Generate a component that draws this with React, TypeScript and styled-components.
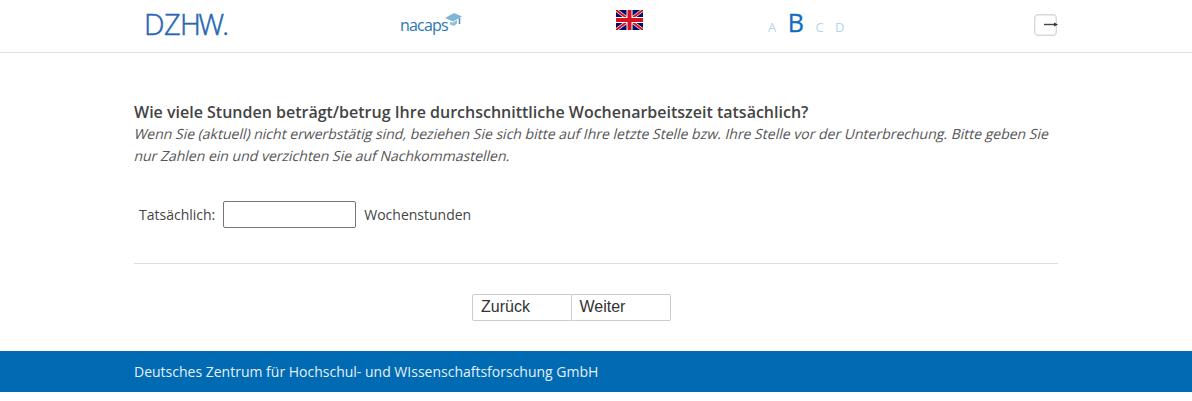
import React from 'react';
import styled, {createGlobalStyle} from "styled-components";

const GlobalStyle = createGlobalStyle`
  html, body {
    margin: 0;
    padding: 0;
    background: #fff;
    font-family: "Open Sans", "Liberation Sans", sans-serif;
    color: #444;
  }
`

const UkFlag = () => (
    <svg width="27" height="20" viewBox="0 0 27 20">
        <rect width="27" height="20" fill="#00106b"/>
        <path d="M0 0L27 20M27 0L0 20" stroke="#fff" strokeWidth="3.2"/>
        <path d="M0 0L27 20M27 0L0 20" stroke="#d8121f" strokeWidth="2"/>
        <path d="M13.5 0V20M0 10H27" stroke="#fff" strokeWidth="6"/>
        <path d="M13.5 0V20M0 10H27" stroke="#d8121f" strokeWidth="4"/>
    </svg>
);

const Cap = () => (
    <svg width="17" height="14" viewBox="0 0 17 14">
        <path d="M0 5L9 0L17 3.5L8 8.5Z" fill="#7fb4d6"/>
        <path d="M5 9V11.5L9 13L12 10.5V7L8 9.5Z" fill="#8fbfdd"/>
        <path d="M14.5 5V11" stroke="#4f94c2" strokeWidth="1.6"/>
    </svg>
);

const ExitIcon = () => (
    <svg width="24" height="24" viewBox="0 0 24 24">
        <rect x="0.7" y="0.7" width="21.6" height="20.6" rx="3.5" fill="#fff" stroke="#d9d9d9" strokeWidth="1.4"/>
        <path d="M10 10.5H21" stroke="#444" strokeWidth="1.4"/>
        <path d="M20 8.5L24 10.5L20 12.5Z" fill="#333"/>
    </svg>
);

export default function App() {
    return (
        <>
            <GlobalStyle/>
            <Header>
                <HeaderInner>
                    <DzhwLogo>DZH<W>W</W><Dot>.</Dot></DzhwLogo>
                    <NacapsLogo>nacaps<CapWrapper><Cap/></CapWrapper></NacapsLogo>
                    <FlagLink><UkFlag/></FlagLink>
                    <Versions>
                        <Version>A</Version>
                        <Version active>B</Version>
                        <Version>C</Version>
                        <Version>D</Version>
                    </Versions>
                    <ExitLink><ExitIcon/></ExitLink>
                </HeaderInner>
            </Header>
            <Main>
                <Question>Wie viele Stunden beträgt/betrug Ihre durchschnittliche Wochenarbeitszeit tatsächlich?</Question>
                <Instruction>
                    <InstructionLine>Wenn Sie (aktuell) nicht erwerbstätig sind, beziehen Sie sich bitte auf Ihre letzte Stelle bzw. Ihre Stelle vor der Unterbrechung. Bitte geben Sie</InstructionLine>
                    <InstructionLine>nur Zahlen ein und verzichten Sie auf Nachkommastellen.</InstructionLine>
                </Instruction>
                <AnswerRow>
                    <span>Tatsächlich:</span>
                    <Input type="text"/>
                    <span>Wochenstunden</span>
                </AnswerRow>
                <Divider/>
                <Pager>
                    <PagerButton>Zurück</PagerButton>
                    <PagerButton>Weiter</PagerButton>
                </Pager>
            </Main>
            <Footer>
                <FooterText>Deutsches Zentrum für Hochschul- und WIssenschaftsforschung GmbH</FooterText>
            </Footer>
        </>
    );
}

const Header = styled.header`
  height: 52px;
  border-bottom: 1px solid #e0e0e0;
`
const HeaderInner = styled.div`
  width: 924px;
  height: 100%;
  margin: 0 auto;
  display: grid;
  grid-template-columns: 266px 216px 152px 266px 24px;
`
const DzhwLogo = styled.div`
  padding: 6px 0 0 10px;
  font-family: "Open Sans", sans-serif;
  font-size: 29px;
  font-weight: 300;
  -webkit-text-stroke: 0.5px #2566b5;
  line-height: 36px;
  letter-spacing: -0.6px;
  color: #2566b5;
`
const W = styled.span`
  margin-left: -2px;
  letter-spacing: -1px;
`
const Dot = styled.span`
  font-size: 20px;
  font-weight: 400;
`
const NacapsLogo = styled.div`
  position: relative;
  padding-top: 13px;
  font-size: 16px;
  line-height: 24px;
  letter-spacing: -0.8px;
  color: #2a78b5;
`
const CapWrapper = styled.span`
  position: absolute;
  left: 45px;
  top: 13px;
  line-height: 0;
`
const FlagLink = styled.div`
  padding-top: 10px;
`
const Versions = styled.div`
  display: flex;
  align-items: baseline;
  gap: 11.5px;
  padding-top: 4px;
  height: 36px;
`
const Version = styled.span<{active?: boolean}>`
  font-size: ${p => p.active ? "25px" : "13px"};
  font-weight: ${p => p.active ? 500 : 400};
  -webkit-text-stroke: ${p => p.active ? "0.3px #0e6cbf" : "0"};
  line-height: 36px;
  color: ${p => p.active ? "#0e6cbf" : "#b5d5ee"};
`
const ExitLink = styled.div`
  padding-top: 14px;
`
const Main = styled.main`
  width: 924px;
  margin: 0 auto;
  padding-top: 48px;
  height: 250px;
`
const Question = styled.div`
  font-size: 16px;
  font-weight: 600;
  line-height: 22px;
  color: #444;
`
const Instruction = styled.div`
  font-size: 14px;
  line-height: 22px;
  color: #555;
`
// the original renders a slanted regular face, narrower italic cut doesn't fit
const InstructionLine = styled.div`
  white-space: nowrap;
  transform: skewX(-14deg);
  transform-origin: left 80%;
  margin-left: -1px;
`
const AnswerRow = styled.div`
  display: flex;
  align-items: center;
  gap: 8px;
  margin-top: 34px;
  padding-left: 5px;
  font-size: 14px;
`
const Input = styled.input`
  box-sizing: border-box;
  width: 133px;
  height: 27px;
  border: 1px solid #767676;
  border-radius: 2px;
  background: #fff;
`
const Divider = styled.hr`
  margin: 35px 0 0;
  border: 0;
  border-top: 1px solid #ddd;
`
const Pager = styled.div`
  display: flex;
  margin: 30px 0 0 338px;
  & > button + button {
    border-left: 0;
    border-radius: 0 2px 2px 0;
  }
  & > button:first-child {
    border-radius: 2px 0 0 2px;
  }
`
const PagerButton = styled.button`
  box-sizing: border-box;
  width: 99.5px;
  height: 27px;
  padding: 0 0 2px 8px;
  text-align: left;
  border: 1px solid #ccc;
  background: #fff;
  font-family: "Liberation Sans", Arial, sans-serif;
  font-size: 16px;
  color: #333;
`
const Footer = styled.footer`
  height: 41px;
  background: #006ab3;
`
const FooterText = styled.div`
  width: 924px;
  margin: 0 auto;
  font-size: 14px;
  line-height: 41px;
  color: #e6f0f7;
`
